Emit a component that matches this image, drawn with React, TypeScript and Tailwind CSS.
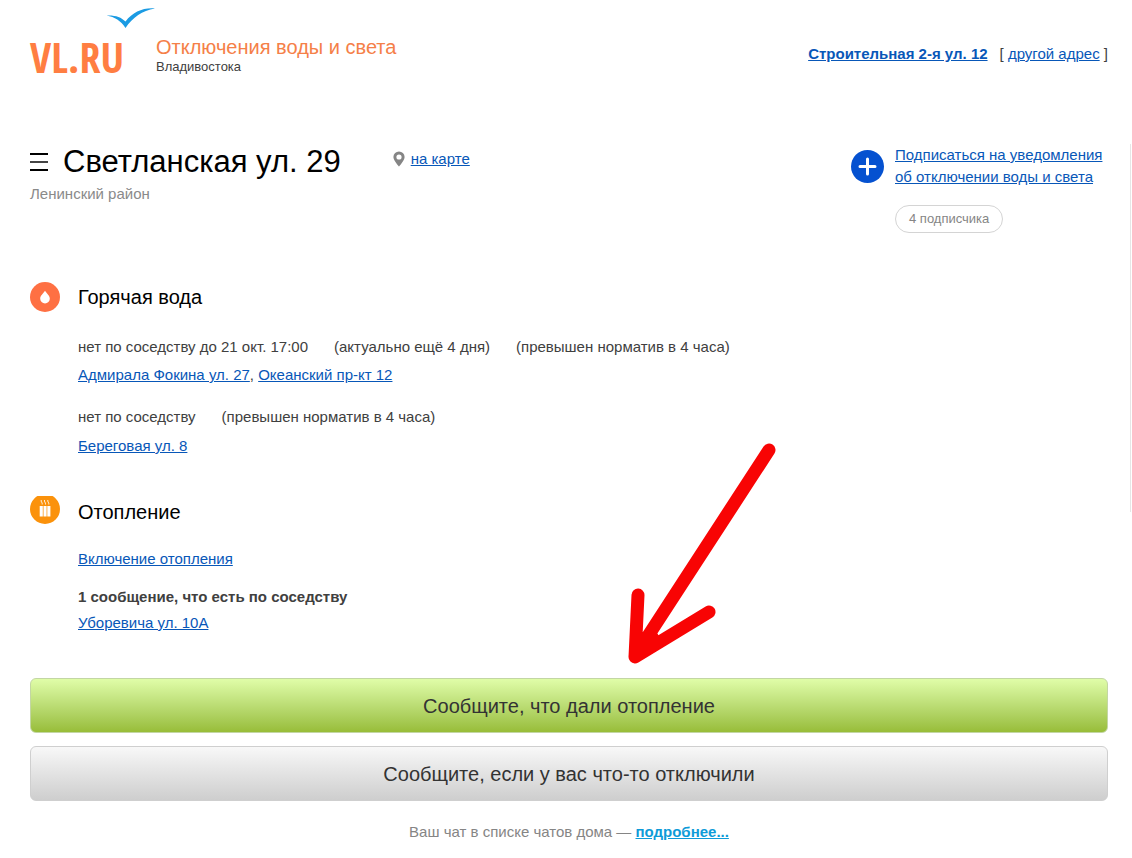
import type { ReactNode } from 'react'
import { clsx } from 'clsx'

interface LinkProps {
  children: ReactNode
  className?: string
}

function Link({ children, className }: LinkProps) {
  return (
    <a href="#" className={clsx('underline', className ?? 'text-[#0857b8]')}>
      {children}
    </a>
  )
}

function Logo() {
  return (
    <a href="#" aria-label="VL.RU" className="flex w-[126px] flex-col pt-2 text-[#ff7e42]">
      <svg viewBox="0 0 50 20" className="h-5 w-[50px] self-end" aria-hidden="true">
        <path
          d="M0.5 7.5C9 7 15 9 19.5 13.5C27 4 37 -0.5 49 0.5C36 3 27 9 19.5 20C14.5 12.5 9 9 0.5 7.5Z"
          fill="#1b9be3"
        />
      </svg>
      <span className="mt-2 font-['Liberation_Sans_Narrow','Open_Sans_Condensed','Liberation_Sans',sans-serif] text-[42px] leading-[42px] font-bold">
        VL.RU
      </span>
    </a>
  )
}

function PinIcon() {
  return (
    <svg viewBox="0 0 12 16" className="h-4 w-3" aria-hidden="true">
      <path
        fillRule="evenodd"
        d="M6 0.5A5.6 5.6 0 0 0 0.4 6C0.4 9.5 6 15.5 6 15.5S11.6 9.5 11.6 6A5.6 5.6 0 0 0 6 0.5ZM6 3.4A2.6 2.6 0 1 1 6 8.6A2.6 2.6 0 0 1 6 3.4Z"
        fill="#858585"
      />
    </svg>
  )
}

function PlusIcon() {
  return (
    <svg viewBox="0 0 33 33" className="h-[33px] w-[33px]" aria-hidden="true">
      <circle cx="16.5" cy="16.5" r="16.5" fill="#0551d0" />
      <path d="M16.5 9V24M9 16.5H24" stroke="#fff" strokeWidth="3" strokeLinecap="round" />
    </svg>
  )
}

function DropIcon() {
  return (
    <svg viewBox="0 0 30 30" className="h-[30px] w-[30px]" aria-hidden="true">
      <circle cx="15" cy="15" r="15" fill="#fe7043" />
      <path d="M15 8.8C16.8 11.8 19.8 13.7 19.8 16.7A4.8 4.8 0 0 1 10.2 16.7C10.2 13.7 13.2 11.8 15 8.8Z" fill="#fff" />
    </svg>
  )
}

function RadiatorIcon() {
  return (
    <svg viewBox="0 2 30 28" className="h-7 w-[30px] self-start" aria-hidden="true">
      <circle cx="15" cy="15" r="15" fill="#fb920b" />
      <path d="M9.7 12h3.1v10.5H9.7zM13.5 12h3.1v10.5h-3.1zM17.3 12h3.1v10.5h-3.1z" fill="#fff" />
      <path
        d="M11.3 6C10.3 7.5 12.8 8.5 12.2 10.5M14.6 6C13.6 7.5 16.1 8.5 15.5 10.5M17.9 6C16.9 7.5 19.4 8.5 18.8 10.5"
        fill="none"
        stroke="#fff"
        strokeOpacity="0.85"
      />
    </svg>
  )
}

function Arrow() {
  return (
    <svg
      viewBox="0 0 160 230"
      className="pointer-events-none absolute top-[438px] left-[620px] h-[230px] w-[160px]"
      aria-hidden="true"
    >
      <path
        d="M149 12L15 218M18 157L15 219L89 174M17 213L32 199"
        fill="none"
        stroke="#f80404"
        strokeWidth="13"
        strokeLinecap="round"
        strokeLinejoin="round"
      />
    </svg>
  )
}

interface ServiceProps {
  icon: ReactNode
  title: string
  children: ReactNode
  className?: string
}

function Service({ icon, title, children, className }: ServiceProps) {
  return (
    <section className={className}>
      <div className="flex items-center gap-[18px]">
        {icon}
        <h2 className="text-[20px] leading-8 text-black">{title}</h2>
      </div>
      <div className="pl-12">{children}</div>
    </section>
  )
}

export default function App() {
  return (
    <div className="relative bg-white pb-4 font-['Liberation_Sans',Arial,sans-serif] text-[15px] leading-5 text-[#404040]">
      <header className="flex h-36 items-start pr-6 pl-[30px]">
        <Logo />
        <div className="pt-[35px]">
          <p className="text-[20px] leading-6 text-[#f58048]">Отключения воды и света</p>
          <p className="text-[13px] leading-4">Владивостока</p>
        </div>
        <p className="ml-auto flex pt-11">
          <Link className="font-bold text-[#0857b8]">Строительная 2-я ул. 12</Link>
          <span className="ml-3">
            [ <Link>другой адрес</Link> ]
          </span>
        </p>
      </header>

      <div className="flex items-start pr-px">
        <main className="flex-1 pr-[22px] pl-[30px]">
          <div className="flex items-start">
            <div>
              <div className="flex items-center">
                <button type="button" aria-label="Меню" className="flex w-[18px] flex-col gap-1.5">
                  <span className="h-0.5 bg-black" />
                  <span className="h-0.5 bg-[#444]" />
                  <span className="h-0.5 bg-black" />
                </button>
                <h1 className="ml-[15px] text-[31px] leading-9 text-black">Светланская ул. 29</h1>
              </div>
              <p className="mt-1 text-[#8a8a8a]">Ленинский район</p>
            </div>
            <div className="ml-[52px] flex items-center gap-1.5 pt-[5px]">
              <PinIcon />
              <Link>на карте</Link>
            </div>
            <div className="ml-auto flex items-start gap-[11px]">
              <div className="pt-1.5">
                <PlusIcon />
              </div>
              <div className="w-[213px]">
                <a href="#" className="block leading-[22px] text-[#0857b8] underline">
                  Подписаться на уведомления
                  <br />
                  об отключении воды и света
                </a>
                <span className="mt-[17px] inline-block rounded-full border border-[#d4d4d4] px-[13px] text-[13px] leading-[26px] text-[#858585]">
                  4 подписчика
                </span>
              </div>
            </div>
          </div>

          <Service className="mt-12" icon={<DropIcon />} title="Горячая вода">
            <p className="mt-6 flex flex-wrap gap-x-[26px]">
              <span>нет по соседству до 21 окт. 17:00</span>
              <span>(актуально ещё 4 дня)</span>
              <span>(превышен норматив в 4 часа)</span>
            </p>
            <p className="mt-2">
              <Link>Адмирала Фокина ул. 27</Link>, <Link>Океанский пр-кт 12</Link>
            </p>
            <p className="mt-[22px] flex flex-wrap gap-x-[26px]">
              <span>нет по соседству</span>
              <span>(превышен норматив в 4 часа)</span>
            </p>
            <p className="mt-[9px]">
              <Link>Береговая ул. 8</Link>
            </p>
          </Service>

          <Service className="mt-10" icon={<RadiatorIcon />} title="Отопление">
            <p className="mt-[21px]">
              <Link>Включение отопления</Link>
            </p>
            <p className="mt-[18px] font-bold">1 сообщение, что есть по соседству</p>
            <p className="mt-1.5">
              <Link>Уборевича ул. 10А</Link>
            </p>
          </Service>
        </main>
        <div className="h-[368px] w-px bg-[#e6e6e6]" />
      </div>

      <div className="mt-[45px] flex flex-col gap-[13px] pr-6 pl-[30px] text-[20px] leading-[51px] text-[#333]">
        <button
          type="button"
          className="rounded-md border border-[#c3d6a4] bg-linear-to-b from-[#e0fda8] to-[#98bd38] pt-0.5"
        >
          Сообщите, что дали отопление
        </button>
        <button
          type="button"
          className="rounded-md border border-[#cfcfcf] bg-linear-to-b from-[#f8f8f8] to-[#cecece] pt-0.5"
        >
          Сообщите, если у вас что-то отключили
        </button>
      </div>

      <p className="mt-[21px] pr-6 pl-[30px] text-center text-[#858585]">
        Ваш чат в списке чатов дома —{' '}
        <Link className="font-bold text-[#0e9bd8]">подробнее...</Link>
      </p>

      <Arrow />
    </div>
  )
}
